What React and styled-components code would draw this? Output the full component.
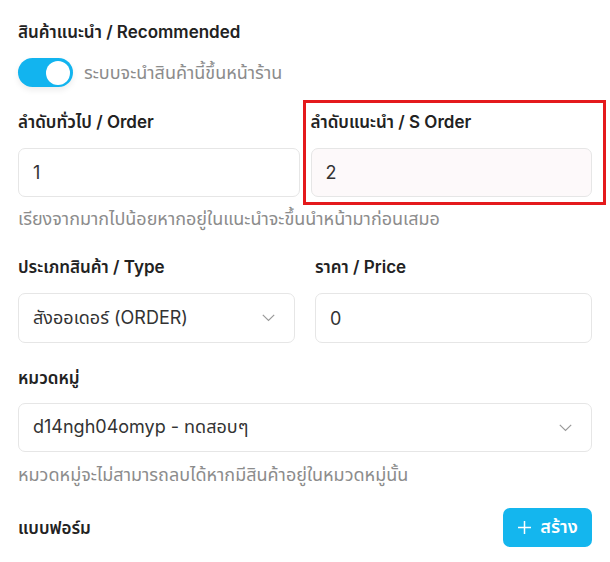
import React from "react";
import styled, { createGlobalStyle } from "styled-components";

const Global = createGlobalStyle`
  html, body { margin: 0; padding: 0; background: #ffffff; }
  body { font-family: Inter, "Noto Sans", "Noto Sans Thai", sans-serif; color: #222; }
  * { box-sizing: border-box; }
`;

const Page = styled.div`
  padding: 20px 18px 0 18px;
  display: flex;
  flex-direction: column;
  width: 610px;
`;

const Label = styled.div`
  font-size: 17px;
  font-weight: 600;
  line-height: 24px;
  color: #222;
  margin-top: ${(p) => p.$mt || 0}px;
`;

const ToggleRow = styled.div`
  display: flex;
  align-items: center;
  gap: 11px;
  margin-top: 14px;
  height: 29px;
`;

const Switch = styled.div`
  width: 55px;
  height: 29px;
  border-radius: 15px;
  background: #12b4ef;
  display: flex;
  align-items: center;
  justify-content: flex-end;
  padding: 0 3px;
  box-shadow: 0 3px 6px rgba(0, 0, 0, 0.08);
`;

const Knob = styled.div`
  width: 24px;
  height: 24px;
  border-radius: 50%;
  background: #fff;
`;

const Muted = styled.div`
  font-size: 18px;
  line-height: 24px;
  color: #8c8c8c;
  margin-top: ${(p) => p.$mt || 0}px;
`;

const Grid = styled.div`
  display: grid;
  grid-template-columns: 1fr 1fr;
  column-gap: ${(p) => p.$gap}px;
  margin-top: ${(p) => p.$mt}px;
`;

const Field = styled.div`
  display: flex;
  flex-direction: column;
  gap: ${(p) => p.$gap || 14}px;
  position: relative;
  margin-top: ${(p) => p.$mt || 0}px;
`;

const Highlight = styled.div`
  position: absolute;
  left: -8px;
  right: -14px;
  top: -10px;
  bottom: -8px;
  border: 3px solid #e4191c;
  pointer-events: none;
`;

const Box = styled.div`
  height: ${(p) => p.$h || 49}px;
  border: 1px solid #e6e6e6;
  border-radius: 7px;
  background: ${(p) => (p.$tint ? "#fdf9fa" : "#fff")};
  display: flex;
  align-items: center;
  justify-content: space-between;
  padding: 0 19px 0 14px;
  font-size: 18px;
  color: #333;
`;

const Chevron = () => (
  <svg width="13" height="8" viewBox="0 0 13 8" fill="none">
    <path d="M0.8 0.8 L6.5 6.5 L12.2 0.8" stroke="#9a9a9a" strokeWidth="1.2" />
  </svg>
);

const Footer = styled.div`
  display: flex;
  align-items: center;
  justify-content: space-between;
  margin-top: 21px;
`;

const Button = styled.button`
  height: 39px;
  width: 89px;
  border: none;
  border-radius: 7px;
  background: #14b6ee;
  color: #fff;
  font-family: inherit;
  font-size: 18px;
  font-weight: 600;
  display: flex;
  align-items: center;
  justify-content: center;
  gap: 8px;
  padding: 0;
`;

export default function App() {
  return (
    <>
      <Global />
      <Page>
        <Label>สินค้าแนะนำ / Recommended</Label>
        <ToggleRow>
          <Switch>
            <Knob />
          </Switch>
          <Muted>ระบบจะนำสินค้านี้ขึ้นหน้าร้าน</Muted>
        </ToggleRow>

        <Grid $gap={11} $mt={23}>
          <Field>
            <Label>ลำดับทั่วไป / Order</Label>
            <Box>1</Box>
          </Field>
          <Field>
            <Highlight />
            <Label>ลำดับแนะนำ / S Order</Label>
            <Box $tint>2</Box>
          </Field>
        </Grid>
        <Muted $mt={10}>เรียงจากมากไปน้อยหากอยู่ในแนะนำจะขึ้นนำหน้ามาก่อนเสมอ</Muted>

        <Grid $gap={20} $mt={24}>
          <Field>
            <Label>ประเภทสินค้า / Type</Label>
            <Box $h={50}>
              <span>สังออเดอร์ (ORDER)</span>
              <Chevron />
            </Box>
          </Field>
          <Field>
            <Label>ราคา / Price</Label>
            <Box $h={50}>0</Box>
          </Field>
        </Grid>

        <Field $gap={13} $mt={23}>
          <Label>หมวดหมู่</Label>
          <Box>
            <span>d14ngh04omyp - ทดสอบๆ</span>
            <Chevron />
          </Box>
        </Field>
        <Muted $mt={11}>หมวดหมู่จะไม่สามารถลบได้หากมีสินค้าอยู่ในหมวดหมู่นั้น</Muted>

        <Footer>
          <Label>แบบฟอร์ม</Label>
          <Button>
            <svg width="15" height="15" viewBox="0 0 15 15">
              <path d="M7.5 1 V14 M1 7.5 H14" stroke="#fff" strokeWidth="1.5" />
            </svg>
            สร้าง
          </Button>
        </Footer>
      </Page>
    </>
  );
}
